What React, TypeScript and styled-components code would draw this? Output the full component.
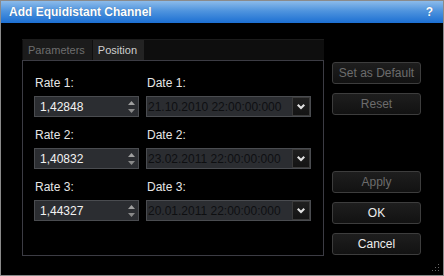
import React from 'react'
import styled, { createGlobalStyle } from 'styled-components'

const GlobalStyle = createGlobalStyle`
  html, body {
    margin: 0;
    padding: 0;
    background: #000;
  }
  body {
    font-family: "Liberation Sans", Arial, sans-serif;
  }
`

const Window = styled.div`
  width: 444px;
  height: 276px;
  box-sizing: border-box;
  border: 1px solid #8a8a8a;
  background: #000;
  display: flex;
  flex-direction: column;
  position: relative;
`

const TitleBar = styled.div`
  height: 22px;
  flex-shrink: 0;
  display: flex;
  align-items: center;
  justify-content: space-between;
  padding: 0 10px 0 8px;
  background: linear-gradient(to bottom, #8cbbea 0%, #4f94de 45%, #1c6fd2 100%);
  color: #fff;
  font-weight: bold;
  font-size: 12px;
  text-shadow: 0 0 1px rgba(0, 0, 0, 0.3);
`

const Body = styled.div`
  display: flex;
  padding: 16px 0 0 21px;
`

const Panel = styled.div`
  width: 302px;
  display: flex;
  flex-direction: column;
`

const TabStrip = styled.div`
  height: 21px;
  display: flex;
  padding-left: 1px;
  background: #0e0e0e;
  border-top: 1px solid #1c1c1c;
  box-sizing: border-box;
`

const Tab = styled.div<{ $active?: boolean }>`
  height: 20px;
  display: flex;
  align-items: center;
  padding: 0 7px 0 5px;
  margin-right: 1px;
  font-size: 11px;
  background: ${({ $active }) => ($active ? '#232323' : '#1b1b1b')};
  color: ${({ $active }) => ($active ? '#cfcfcf' : '#6e6e6e')};
`

const Page = styled.div`
  height: 196px;
  box-sizing: border-box;
  border: 1px solid #3c3c44;
  padding: 9px 12px 0 11px;
  display: grid;
  grid-template-columns: 105px 165px;
  column-gap: 7px;
  grid-auto-rows: 26px;
`

const Label = styled.div`
  font-size: 12px;
  color: #e6e6e6;
  padding: 6px 0 0 1px;
`

const Field = styled.div`
  height: 21px;
  box-sizing: border-box;
  border: 1px solid #4a4c50;
  background: #2b2d31;
  display: flex;
  align-items: center;
  font-size: 12px;
`

const Value = styled.div<{ $disabled?: boolean }>`
  flex: 1;
  padding-left: ${({ $disabled }) => ($disabled ? '1px' : '5px')};
  color: ${({ $disabled }) => ($disabled ? '#0e0f11' : '#f2f2f2')};
  white-space: nowrap;
  overflow: hidden;
`

const Spinner = styled.div`
  width: 14px;
  display: flex;
  flex-direction: column;
  align-items: center;
  gap: 4px;
`

const Drop = styled.div`
  width: 18px;
  height: 19px;
  box-sizing: border-box;
  border: 1px solid #3a3a3a;
  background: linear-gradient(#1f1f1f, #141414);
  display: flex;
  align-items: center;
  justify-content: center;
`

const Side = styled.div`
  margin-left: 8px;
  margin-top: 23px;
  width: 89px;
  display: flex;
  flex-direction: column;
`

const Button = styled.div<{ $disabled?: boolean; $gap?: number }>`
  height: 22px;
  box-sizing: border-box;
  margin-top: ${({ $gap }) => $gap ?? 9}px;
  border: 1px solid #3d3d3d;
  border-radius: 3px;
  background: linear-gradient(#1e1e1e, #121212);
  display: flex;
  align-items: center;
  justify-content: center;
  font-size: 12px;
  color: ${({ $disabled }) => ($disabled ? '#6c6c6c' : '#ececec')};
`

const Grip = styled.svg`
  position: absolute;
  right: 3px;
  bottom: 3px;
`

const SpinArrows = () => (
  <Spinner>
    <svg width="7" height="4" viewBox="0 0 7 4"><path d="M3.5 0L7 4H0z" fill="#a0a0a0" /></svg>
    <svg width="7" height="4" viewBox="0 0 7 4"><path d="M0 0h7L3.5 4z" fill="#8a8a8a" /></svg>
  </Spinner>
)

const Chevron = () => (
  <svg width="8" height="6" viewBox="0 0 8 6">
    <path d="M0 1.5L1.5 0L4 2.5L6.5 0L8 1.5L4 5.5z" fill="#e0e0e0" />
  </svg>
)

const points = [
  { rate: '1,42848', date: '21.10.2010 22:00:00:000' },
  { rate: '1,40832', date: '23.02.2011 22:00:00:000' },
  { rate: '1,44327', date: '20.01.2011 22:00:00:000' },
]

const App = () => {
  return (
    <Window>
      <GlobalStyle />
      <TitleBar>
        <span>Add Equidistant Channel</span>
        <span>?</span>
      </TitleBar>
      <Body>
        <Panel>
          <TabStrip>
            <Tab>Parameters</Tab>
            <Tab $active>Position</Tab>
          </TabStrip>
          <Page>
            {points.map((p, i) => (
              <React.Fragment key={i}>
                <Label>Rate {i + 1}:</Label>
                <Label>Date {i + 1}:</Label>
                <Field>
                  <Value>{p.rate}</Value>
                  <SpinArrows />
                </Field>
                <Field>
                  <Value $disabled>{p.date}</Value>
                  <Drop>
                    <Chevron />
                  </Drop>
                </Field>
              </React.Fragment>
            ))}
          </Page>
        </Panel>
        <Side>
          <Button $disabled $gap={0}>Set as Default</Button>
          <Button $disabled>Reset</Button>
          <Button $disabled $gap={56}>Apply</Button>
          <Button>OK</Button>
          <Button>Cancel</Button>
        </Side>
      </Body>
      <Grip width="8" height="8" viewBox="0 0 8 8">
        {[[6, 0], [6, 3], [3, 3], [6, 6], [3, 6], [0, 6]].map(([x, y], i) => (
          <rect key={i} x={x} y={y} width="1" height="1" fill="#666" />
        ))}
      </Grip>
    </Window>
  )
}

export default App
